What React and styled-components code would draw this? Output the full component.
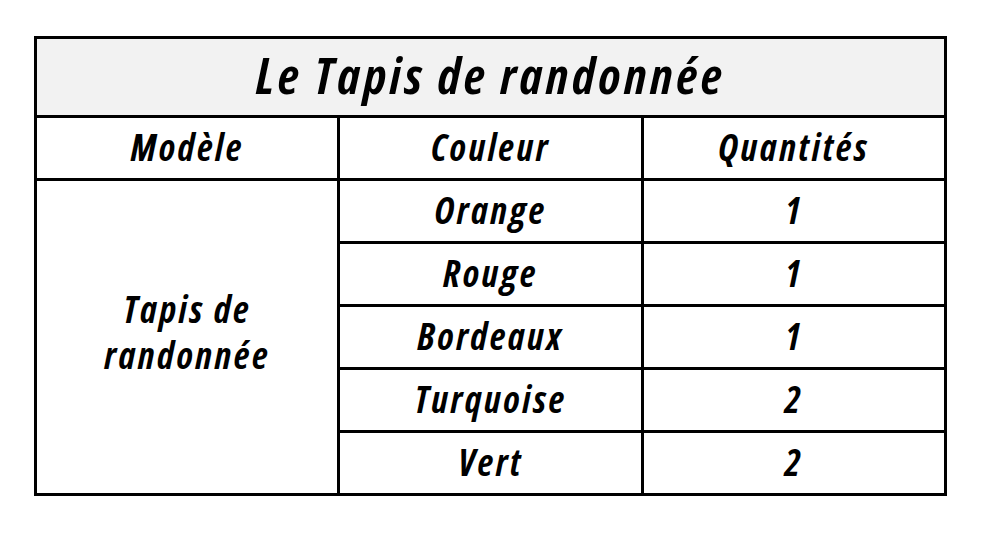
import React from "react";
import styled, { createGlobalStyle } from "styled-components";

const rows = [
    { couleur: "Orange", qte: 1 },
    { couleur: "Rouge", qte: 1 },
    { couleur: "Bordeaux", qte: 1 },
    { couleur: "Turquoise", qte: 2 },
    { couleur: "Vert", qte: 2 },
];

const GlobalStyle = createGlobalStyle`
    body {
        margin: 0;
        background: #ffffff;
        font-family: "Open Sans", "DejaVu Sans Condensed", sans-serif;
        font-stretch: 75%;
    }
`;

const App = () => {
    return (
        <Page>
            <GlobalStyle />
            <Table>
                <colgroup>
                    <col style={{ width: "33.33%" }} />
                    <col style={{ width: "33.33%" }} />
                    <col style={{ width: "33.33%" }} />
                </colgroup>
                <tbody>
                    <tr>
                        <TitleCell colSpan={3}>Le Tapis de randonnée</TitleCell>
                    </tr>
                    <tr>
                        <Cell>Modèle</Cell>
                        <Cell>Couleur</Cell>
                        <Cell>Quantités</Cell>
                    </tr>
                    {rows.map((r, i) => (
                        <tr key={r.couleur}>
                            {i === 0 && <ModelCell rowSpan={rows.length}>Tapis de<br />randonnée</ModelCell>}
                            <Cell>{r.couleur}</Cell>
                            <Cell>{r.qte}</Cell>
                        </tr>
                    ))}
                </tbody>
            </Table>
        </Page>
    );
};

/* Styled Components */
const Page = styled.div`
    padding: 36px 0 0 34px;
`;

const Table = styled.table`
    width: 913px;
    border-collapse: collapse;
    table-layout: fixed;
    border: 3px solid #000;
`;

const Cell = styled.td`
    border: 3px solid #000;
    height: 56px;
    padding: 0 0 4px 0;
    text-align: center;
    vertical-align: middle;
    font-weight: bold;
    font-style: italic;
    font-stretch: 75%;
    font-size: 37px;
    letter-spacing: 2.5px;
    line-height: 1;
    color: #000;
`;

const TitleCell = styled(Cell)`
    height: 72px;
    background: #f2f2f2;
    font-size: 50px;
    letter-spacing: 3.5px;
`;

const ModelCell = styled(Cell)`
    height: auto;
    line-height: 1.25;
    padding-bottom: 10px;
`;

export default App;
